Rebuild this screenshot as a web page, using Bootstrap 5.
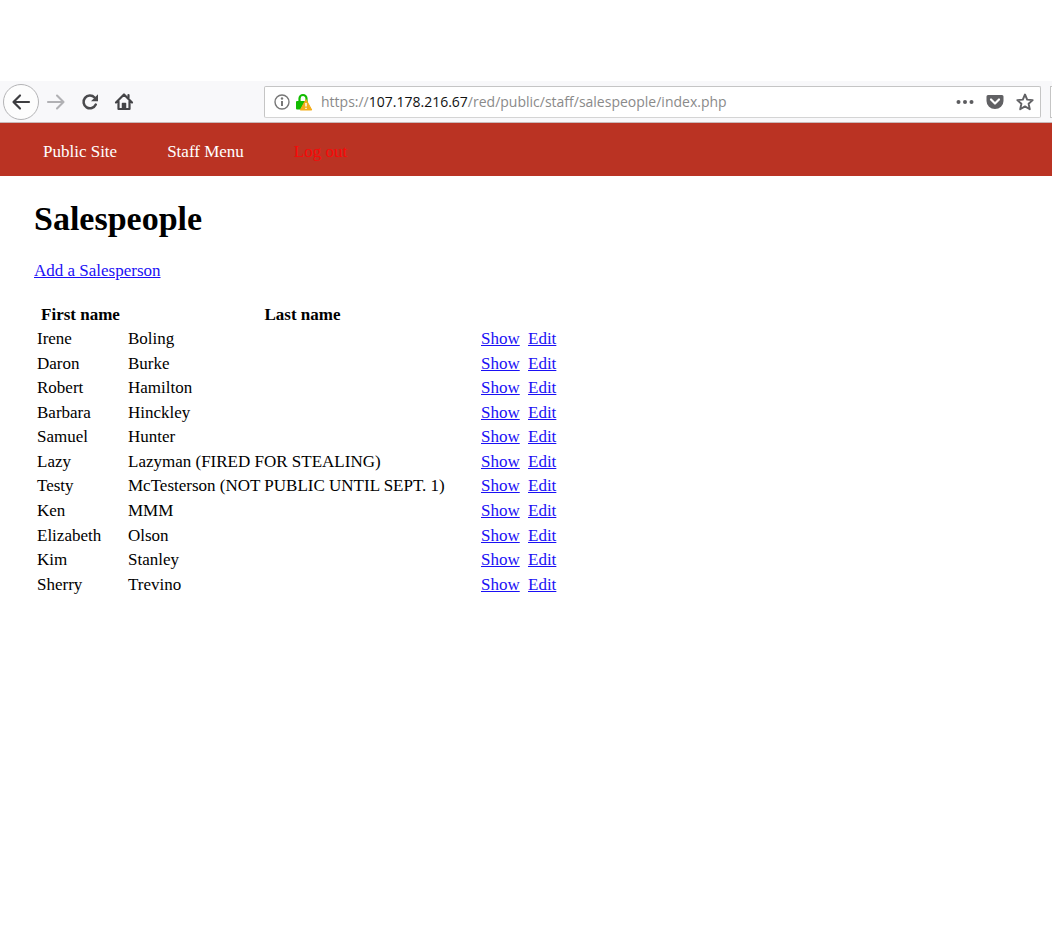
<!DOCTYPE html>
<html lang="en">
<head>
<meta charset="utf-8">
<meta name="viewport" content="width=device-width, initial-scale=1">
<title>Salespeople</title>
<link href="https://cdn.jsdelivr.net/npm/bootstrap@5.3.0/dist/css/bootstrap.min.css" rel="stylesheet">
<style>
  body { font: 17px/20px "Liberation Serif", "Times New Roman", serif; color: #000; background: #fff; padding-top: 81px; }
  a { color: #1a10f5; }
  .browser-bar { height: 42px; padding-left: 3px; background: #f8f8fa; border-bottom: 1px solid #c9b9b9; overflow: hidden; }
  .tool { width: 34px; height: 36px; border: 0; background: none; padding: 0; display: flex; align-items: center; justify-content: center; }
  .tool-back { width: 36px; border: 1px solid #b4b4b6; border-radius: 50%; background: #fdfdfd; }
  .tool-small { width: 30px; }
  .address { height: 32px; margin-left: 123px; background: #fff; border: 1px solid #c5c5c5; border-bottom-color: #d4d4d4; border-radius: 2px; padding-left: 9px; }
  .url { font: 14px/20px "Open Sans", "Noto Sans", sans-serif; color: #8a8a8a; margin-left: 8px; outline: 0; white-space: nowrap; overflow: hidden; }
  .url b { font-weight: 400; color: #111; }
  .next-field { width: 2px; height: 32px; margin-left: 9px; border: 1px solid #c5c5c5; border-right: 0; background: #fff; }
  .site-nav { background: #ba3323; height: 53px; padding: 4px 43px 0; gap: 50px; }
  .site-nav a { color: #fff; text-decoration: none; }
  .site-nav .logout { color: #f80808; }
  .page { padding: 23px 34px; }
  h1 { font-size: 34px; line-height: 40px; font-weight: 700; margin-bottom: 22px; }
  .people { border-collapse: separate; border-spacing: 2px; table-layout: fixed; width: 525px; height: 296px; margin-top: 21px; }
  .people th, .people td { padding: 1px; white-space: nowrap; }
  .people th { text-align: center; }
  .c-first { width: 89px; } .c-last { width: 351px; } .c-show { width: 45px; }
</style>
</head>
<body>
<div class="browser-bar d-flex align-items-center">
  <div class="d-flex align-items-center flex-shrink-0">
    <button class="tool tool-back" type="button" aria-label="Back"><svg width="20" height="20" viewBox="0 0 20 20" fill="none" stroke="#3d3d40" stroke-width="2.2" stroke-linecap="round" stroke-linejoin="round"><path d="M18 10H3M9 3.5 2.500 10 9 16.500"/></svg></button>
    <button class="tool" type="button" aria-label="Forward"><svg width="20" height="20" viewBox="0 0 20 20" fill="none" stroke="#b1b1b4" stroke-width="2.100" stroke-linecap="round" stroke-linejoin="round"><path d="M2 10H17M11 3.500 17.500 10 11 16.500"/></svg></button>
    <button class="tool" type="button" aria-label="Reload"><svg width="18" height="18" viewBox="0 0 18 18" fill="none"><path d="M14.800 11.600A6.400 6.400 0 1 1 13.600 4.500" stroke="#4a4a4d" stroke-width="2.500" stroke-linecap="round"/><path d="M17 1.300V8.300H10Z" fill="#4a4a4d"/></svg></button>
    <button class="tool" type="button" aria-label="Home"><svg width="20" height="20" viewBox="0 0 20 20" fill="none" stroke="#444447" stroke-width="2.200" stroke-linejoin="round" stroke-linecap="round"><path d="M2 10.500 10 2.500 18 10.500M4.500 9.500V17H15.500V9.500"/><path d="M14.500 3V5.500"/><path d="M8.500 17V11.500H11.500V17Z" stroke-width="1.500" fill="#444447"/></svg></button>
  </div>
  <div class="address d-flex align-items-center flex-grow-1">
    <svg class="flex-shrink-0" width="16" height="16" viewBox="0 0 16 16"><circle cx="8" cy="8" r="7" fill="none" stroke="#777" stroke-width="1.400"/><circle cx="8" cy="4.500" r="1.200" fill="#777"/><path d="M8 7V12" stroke="#777" stroke-width="2"/></svg>
    <svg class="flex-shrink-0 ms-1" width="19" height="18" viewBox="0 0 19 18"><path d="M5.500 9V5.500a3.500 3.500 0 0 1 7 0V8" fill="none" stroke="#12bc00" stroke-width="2.200"/><rect x="2" y="8" width="12" height="8.500" rx="1" fill="#12bc00"/><path d="M12 6.500 17.800 17H6.200Z" fill="#f4ad19" stroke="#f4ad19" stroke-linejoin="round"/><path d="M12 10V13.500M12 14.700V16" stroke="#fff" stroke-width="1.400"/></svg>
    <div class="url flex-grow-1" role="textbox" aria-label="Address" contenteditable="true" spellcheck="false">https://<b>107.178.216.67</b>/red/public/staff/salespeople/index.php</div>
    <button class="tool tool-small" type="button" aria-label="Page actions"><svg width="18" height="6" viewBox="0 0 18 6" fill="#5c5c5f"><circle cx="2.500" cy="3" r="2"/><circle cx="9" cy="3" r="2"/><circle cx="15.500" cy="3" r="2"/></svg></button>
    <button class="tool tool-small" type="button" aria-label="Save to Pocket"><svg width="18" height="16" viewBox="0 0 18 16"><path d="M2 1H16a1.500 1.500 0 0 1 1.500 1.500V7A8.500 8 0 0 1 .5 7V2.500A1.500 1.500 0 0 1 2 1Z" fill="#616164"/><path d="M5 5.500 9 9.500 13 5.500" fill="none" stroke="#fff" stroke-width="2.200" stroke-linecap="round" stroke-linejoin="round"/></svg></button>
    <button class="tool tool-small" type="button" aria-label="Bookmark"><svg width="18" height="18" viewBox="0 0 18 18"><path d="M9 1.500 11.200 6.600 16.700 7.100 12.600 10.800 13.800 16.200 9 13.400 4.200 16.200 5.400 10.800 1.300 7.100 6.800 6.600Z" fill="none" stroke="#616164" stroke-width="1.900" stroke-linejoin="round"/></svg></button>
  </div>
  <div class="next-field"></div>
</div>

<nav class="site-nav d-flex align-items-center" aria-label="Site">
  <a href="#">Public Site</a>
  <a href="#">Staff Menu</a>
  <a class="logout" href="#">Log out</a>
</nav>

<main class="page">
  <h1>Salespeople</h1>
  <a href="#">Add a Salesperson</a>
  <table class="people">
    <colgroup><col class="c-first"><col class="c-last"><col class="c-show"><col></colgroup>
    <thead><tr><th scope="col">First name</th><th scope="col">Last name</th><td></td><td></td></tr></thead>
    <tbody>
      <tr><td>Irene</td><td>Boling</td><td><a href="#">Show</a></td><td><a href="#">Edit</a></td></tr>
      <tr><td>Daron</td><td>Burke</td><td><a href="#">Show</a></td><td><a href="#">Edit</a></td></tr>
      <tr><td>Robert</td><td>Hamilton</td><td><a href="#">Show</a></td><td><a href="#">Edit</a></td></tr>
      <tr><td>Barbara</td><td>Hinckley</td><td><a href="#">Show</a></td><td><a href="#">Edit</a></td></tr>
      <tr><td>Samuel</td><td>Hunter</td><td><a href="#">Show</a></td><td><a href="#">Edit</a></td></tr>
      <tr><td>Lazy</td><td>Lazyman (FIRED FOR STEALING)</td><td><a href="#">Show</a></td><td><a href="#">Edit</a></td></tr>
      <tr><td>Testy</td><td>McTesterson (NOT PUBLIC UNTIL SEPT. 1)</td><td><a href="#">Show</a></td><td><a href="#">Edit</a></td></tr>
      <tr><td>Ken</td><td>MMM</td><td><a href="#">Show</a></td><td><a href="#">Edit</a></td></tr>
      <tr><td>Elizabeth</td><td>Olson</td><td><a href="#">Show</a></td><td><a href="#">Edit</a></td></tr>
      <tr><td>Kim</td><td>Stanley</td><td><a href="#">Show</a></td><td><a href="#">Edit</a></td></tr>
      <tr><td>Sherry</td><td>Trevino</td><td><a href="#">Show</a></td><td><a href="#">Edit</a></td></tr>
    </tbody>
  </table>
</main>
<script src="https://cdn.jsdelivr.net/npm/bootstrap@5.3.0/dist/js/bootstrap.bundle.min.js"></script>
</body>
</html>
